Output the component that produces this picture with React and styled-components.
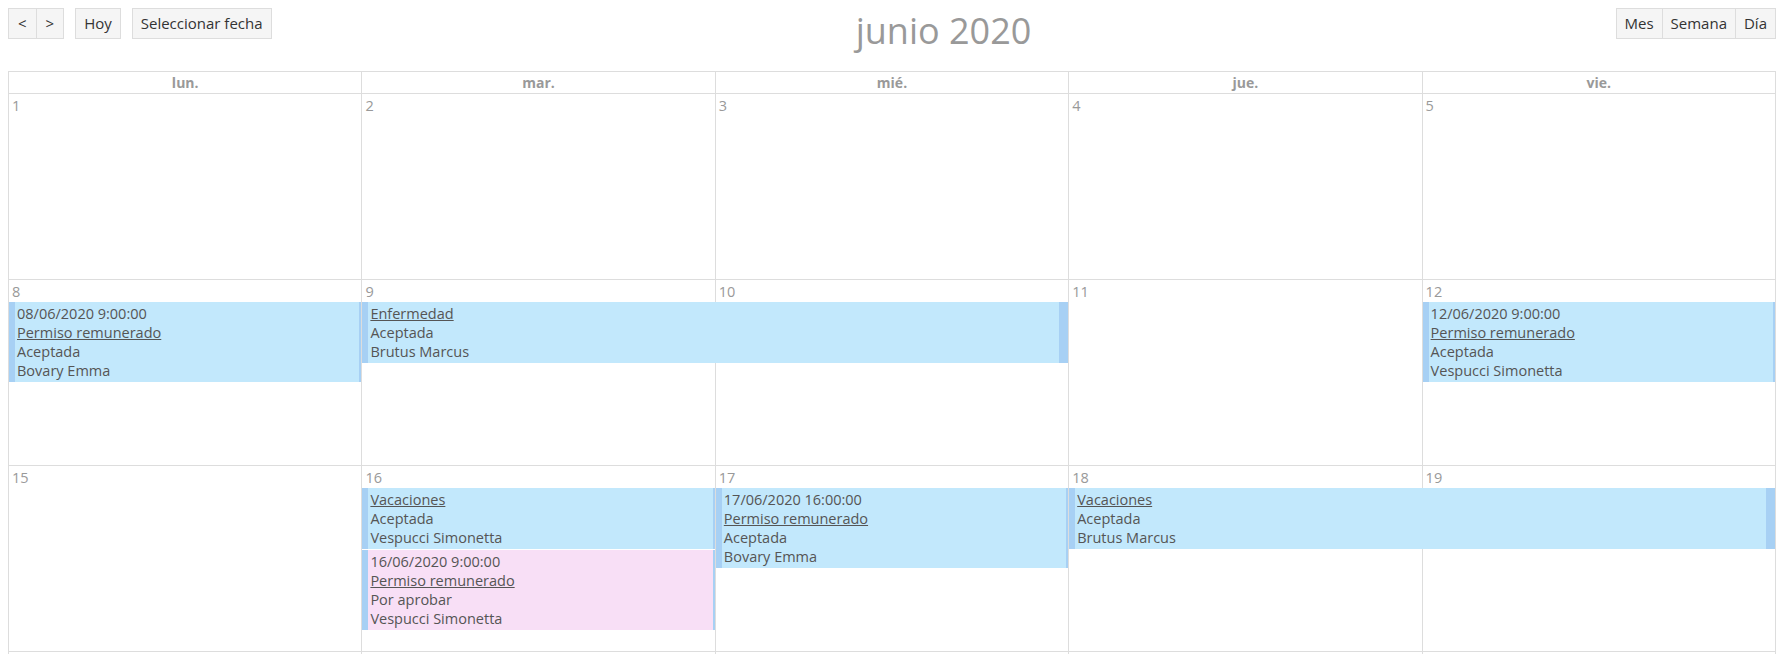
import React from "react";
import styled, { createGlobalStyle } from "styled-components";

const GlobalStyle = createGlobalStyle`
  html, body { overflow: hidden; }
  body {
    margin: 8px;
    font-family: "Open Sans", "Noto Sans", sans-serif;
    color: #555;
    background: #fff;
  }
`;

const Toolbar = styled.div`
  display: flex;
  align-items: flex-start;
  height: 46px;
  margin-bottom: 17px;
`;

const Group = styled.div`
  display: flex;
  gap: ${(p) => (p.$spaced ? "11px" : "0")};
`;

const Joined = styled.div`
  display: flex;
  & > button + button { margin-left: -1px; }
`;

const Button = styled.button`
  height: 31px;
  padding: 0 ${(p) => p.$pad || 8}px;
  background: #f5f5f5;
  border: 1px solid #ddd;
  border-radius: 0;
  font-family: "Open Sans", sans-serif;
  font-size: 15px;
  color: #333;
  line-height: 29px;
  cursor: pointer;
`;

const Title = styled.h2`
  flex: 1;
  margin: 0;
  text-align: center;
  font-size: 36px;
  font-weight: 400;
  line-height: 46px;
  color: #999;
`;

const Calendar = styled.div`
  border-top: 1px solid #ddd;
  border-left: 1px solid #ddd;
`;

const HeaderRow = styled.div`
  display: grid;
  grid-template-columns: repeat(5, 1fr);
`;

const HeaderCell = styled.div`
  border-right: 1px solid #ddd;
  border-bottom: 1px solid #ddd;
  text-align: center;
  font-size: 14px;
  font-weight: 700;
  color: #999;
  line-height: 21px;
`;

const Week = styled.div`
  display: grid;
  grid-template-columns: repeat(5, 1fr);
  grid-template-rows: 22px 1fr;
  height: 185px;
  border-bottom: 1px solid #ddd;
`;

const DayCell = styled.div`
  grid-column: ${(p) => p.$col};
  grid-row: 1 / 3;
  border-right: 1px solid #ddd;
  font-size: 14.5px;
  line-height: 21px;
  padding: 1px 3px 0;
  color: #999;
`;

const Stack = styled.div`
  grid-column: ${(p) => p.$col} / span ${(p) => p.$span || 1};
  grid-row: 2;
  align-self: start;
  display: flex;
  flex-direction: column;
  gap: 1px;
  margin-right: 1px;
  z-index: 1;
`;

const Event = styled.div`
  background: ${(p) => (p.$pending ? "#f8dff6" : "#c2e8fc")};
  border-left: 6px solid #a7d0f4;
  border-right: ${(p) => (p.$wide ? 9 : 2)}px solid #a7d0f4;
  padding: 2px 2px;
  font-size: 14.5px;
  line-height: 19px;
  color: #555;
`;

const Line = styled.div`
  white-space: nowrap;
  text-decoration: ${(p) => (p.$link ? "underline" : "none")};
`;

const days = ["lun.", "mar.", "mié.", "jue.", "vie."];

const weeks = [
  { days: [1, 2, 3, 4, 5], stacks: [] },
  {
    days: [8, 9, 10, 11, 12],
    stacks: [
      { col: 1, events: [{ lines: ["08/06/2020 9:00:00", "*Permiso remunerado", "Aceptada", "Bovary Emma"] }] },
      { col: 2, span: 2, events: [{ wide: true, lines: ["*Enfermedad", "Aceptada", "Brutus Marcus"] }] },
      { col: 5, events: [{ lines: ["12/06/2020 9:00:00", "*Permiso remunerado", "Aceptada", "Vespucci Simonetta"] }] },
    ],
  },
  {
    days: [15, 16, 17, 18, 19],
    stacks: [
      {
        col: 2,
        events: [
          { lines: ["*Vacaciones", "Aceptada", "Vespucci Simonetta"] },
          { pending: true, lines: ["16/06/2020 9:00:00", "*Permiso remunerado", "Por aprobar", "Vespucci Simonetta"] },
        ],
      },
      { col: 3, events: [{ lines: ["17/06/2020 16:00:00", "*Permiso remunerado", "Aceptada", "Bovary Emma"] }] },
      { col: 4, span: 2, events: [{ wide: true, lines: ["*Vacaciones", "Aceptada", "Brutus Marcus"] }] },
    ],
  },
  { days: [null, null, null, null, null], stacks: [] },
];

export default function App() {
  return (
    <>
      <GlobalStyle />
      <Toolbar>
        <Group $spaced>
          <Joined>
            <Button $pad={9}>&lt;</Button>
            <Button $pad={9}>&gt;</Button>
          </Joined>
          <Button>Hoy</Button>
          <Button>Seleccionar fecha</Button>
        </Group>
        <Title>junio 2020</Title>
        <Joined>
          <Button>Mes</Button>
          <Button>Semana</Button>
          <Button>Día</Button>
        </Joined>
      </Toolbar>
      <Calendar>
        <HeaderRow>
          {days.map((d) => (
            <HeaderCell key={d}>{d}</HeaderCell>
          ))}
        </HeaderRow>
        {weeks.map((w, wi) => (
          <Week key={wi}>
            {w.days.map((d, i) => (
              <DayCell key={i} $col={i + 1}>
                {d}
              </DayCell>
            ))}
            {w.stacks.map((s, si) => (
              <Stack key={si} $col={s.col} $span={s.span}>
                {s.events.map((e, ei) => (
                  <Event key={ei} $wide={e.wide} $pending={e.pending}>
                    {e.lines.map((l, li) =>
                      l.startsWith("*") ? (
                        <Line key={li} $link>
                          {l.slice(1)}
                        </Line>
                      ) : (
                        <Line key={li}>{l}</Line>
                      )
                    )}
                  </Event>
                ))}
              </Stack>
            ))}
          </Week>
        ))}
      </Calendar>
    </>
  );
}
